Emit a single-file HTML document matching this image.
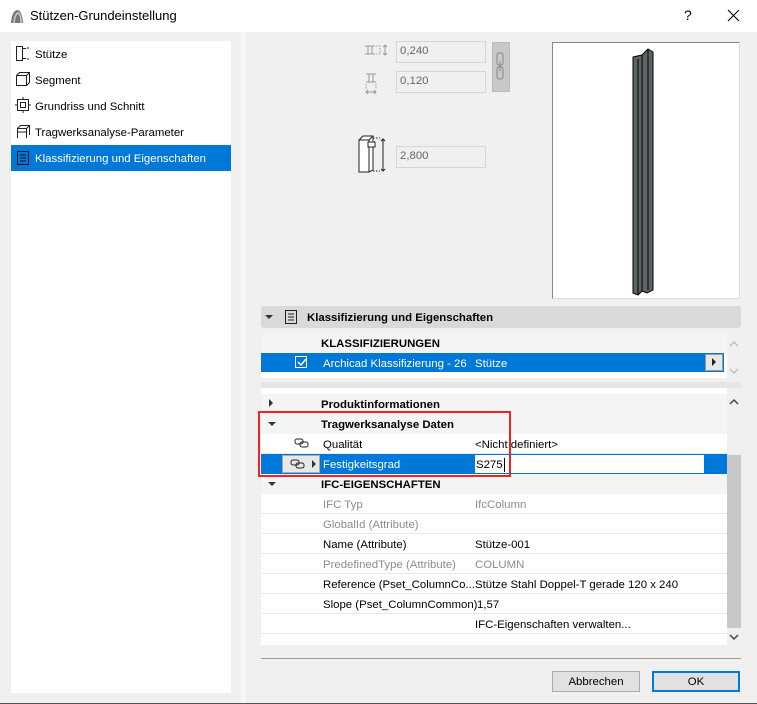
<!DOCTYPE html>
<html><head><meta charset="utf-8"><style>
*{box-sizing:border-box;margin:0;padding:0}
body{width:757px;height:704px;background:#f0f0f0;font-family:"Segoe UI","Liberation Sans",sans-serif;font-size:11.4px;color:#000;position:relative;overflow:hidden}
.a{position:absolute}
.t{position:absolute;white-space:nowrap;line-height:16px;margin-top:1px}
.inp{position:absolute;background:#f0f0f0;border:1px solid #d6d6d6;color:#555;padding-left:3px;line-height:19px;font-size:11.4px}
.row{position:absolute;left:261px;width:466px;height:20px;border-bottom:1px solid #e8e8e8;background:#fff}
.row span{position:absolute;top:3px;white-space:nowrap;line-height:16px}
.g{color:#8c8c8c}
.hd{background:#f4f4f4;font-weight:bold}
.tri{position:absolute;width:0;height:0}
</style></head><body>
<div class="a" style="left:0;top:0;width:757px;height:32px;background:#fff"></div>
<svg class="a" style="left:9px;top:8px" width="16" height="16"><path d="M2 15 Q3 3 8 2 Q13 2 14 15 Z" fill="#777"/><path d="M5 15 Q6 6 9 5 Q12 6 12 15" fill="none" stroke="#ccc" stroke-width="1.5"/></svg>
<div class="t" style="left:30px;top:7px;font-size:13px">Stützen-Grundeinstellung</div>
<div class="t" style="left:684px;top:6px;font-size:14px">?</div>
<svg class="a" style="left:727px;top:9px" width="13" height="13"><path d="M1 1L12 12M12 1L1 12" stroke="#000" stroke-width="1.1"/></svg>

<div class="a" style="left:11px;top:41px;width:220px;height:652px;background:#fff"></div>
<div class="a" style="left:241px;top:32px;width:5px;height:672px;background:#f6f6f6"></div>
<div class="a" style="left:0;top:703px;width:757px;height:1px;background:#555"></div>
<svg class="a" style="left:15px;top:45px" width="16" height="18" fill="none" stroke="#222"><rect x="1.5" y="1.5" width="6" height="14"/><path d="M7.5 3.5H11M7.5 13.5H11M13 2v2M13 13v2"/></svg>
<div class="t" style="left:35px;top:46px">Stütze</div>
<svg class="a" style="left:15px;top:71px" width="16" height="16" fill="none" stroke="#222"><path d="M1.5 4.5L4.5 1.5H14.5V11.5L11.5 14.5H1.5Z M1.5 4.5H11.5V14.5M11.5 4.5L14.5 1.5"/></svg>
<div class="t" style="left:35px;top:72px">Segment</div>
<svg class="a" style="left:15px;top:97px" width="16" height="16" fill="none" stroke="#222"><rect x="2.5" y="2.5" width="11" height="11"/><rect x="5.5" y="5.5" width="5" height="5"/><path d="M8 0v3M8 13v3M0 8h3M13 8h3"/></svg>
<div class="t" style="left:35px;top:98px">Grundriss und Schnitt</div>
<svg class="a" style="left:15px;top:123px" width="16" height="16" fill="none" stroke="#222"><path d="M2.5 15V5.5L5.5 2.5H14.5V12M2.5 5.5H11.5V15M11.5 5.5L14.5 2.5M2.5 9h9"/></svg>
<div class="t" style="left:35px;top:124px">Tragwerksanalyse-Parameter</div>
<div class="a" style="left:11px;top:145px;width:220px;height:26px;background:#0078d7"></div>
<svg class="a" style="left:16px;top:150px" width="14" height="16" fill="none" stroke="#111"><rect x="1.5" y="1.5" width="11" height="13"/><path d="M4 5h6M4 8h6M4 11h6"/></svg>
<div class="t" style="left:35px;top:150px;color:#fff">Klassifizierung und Eigenschaften</div>

<svg class="a" style="left:363px;top:42px" width="30" height="56" fill="none" stroke="#999"><path d="M2 4h10M2 12h10M5 4v8M9 4v8" /><path d="M13 4h4v8h-4" stroke-dasharray="1.5 1.5"/><path d="M22 3v10M20 5l2-2 2 2M20 11l2 2 2-2"/><path d="M3 32h10M3 40h10M6 32v8M10 32v8"/><path d="M3 42v6M13 42v6" stroke-dasharray="1.5 1.5"/><path d="M3 50h10M5 48l-2 2 2 2M11 48l2 2-2 2"/></svg>
<div class="inp" style="left:396px;top:41px;width:90px;height:22px;color:#666">0,240</div>
<div class="inp" style="left:396px;top:71px;width:90px;height:22px;color:#666">0,120</div>
<div class="a" style="left:492px;top:42px;width:18px;height:50px;background:#c8c8c8;border:1px solid #bbb"></div>
<svg class="a" style="left:495px;top:52px" width="12" height="30" fill="none" stroke="#888"><rect x="2" y="1" width="6" height="12" rx="2"/><rect x="2" y="15" width="6" height="12" rx="2"/><path d="M5 9v10"/></svg>
<svg class="a" style="left:357px;top:135px" width="36" height="38" fill="none" stroke="#222"><path d="M2 5L6 1h10v34l-4 2H2z" fill="#fff"/><path d="M2 5h10v32M12 5l4-4"/><path d="M16 3h7M16 36h7" stroke-dasharray="1.5 1.5"/><path d="M26 4v32M24 6l2-2 2 2M24 34l2 2 2-2"/><rect x="11" y="7" width="7" height="5" fill="#fff"/></svg>
<div class="inp" style="left:396px;top:146px;width:90px;height:22px;color:#666">2,800</div>

<div class="a" style="left:552px;top:42px;width:188px;height:257px;background:#fff;border:1px solid #888;border-right-color:#ddd;border-bottom-color:#ddd"></div>
<svg class="a" style="left:630px;top:45px" width="30" height="255"><path d="M3 12L12 10L18 4L23 7V245L17 248L12 246L8 250L3 248Z" fill="#5e6466" stroke="#000"/><path d="M8 14V250M12 10V246M18 5V245" stroke="#000" fill="none"/></svg>

<div class="a" style="left:261px;top:306px;width:480px;height:22px;background:#d9d9d9;border-radius:3px"></div>
<div class="tri" style="left:265px;top:315px;border-left:4px solid transparent;border-right:4px solid transparent;border-top:4px solid #333"></div>
<svg class="a" style="left:284px;top:309px" width="14" height="16" fill="none" stroke="#222"><rect x="1.5" y="1.5" width="11" height="13"/><path d="M4 5h6M4 8h6M4 11h6"/></svg>
<div class="t" style="left:307px;top:309px;font-weight:bold">Klassifizierung und Eigenschaften</div>

<div class="a" style="left:261px;top:333px;width:466px;height:45px;background:#fff"></div>
<div class="a" style="left:261px;top:333px;width:466px;height:20px;background:#f4f4f4"></div>
<div class="t" style="left:321px;top:335px;font-weight:bold">KLASSIFIZIERUNGEN</div>
<div class="a" style="left:261px;top:353px;width:463px;height:19px;background:#0078d7"></div>
<div class="a" style="left:295px;top:356px;width:12px;height:12px;border:1px solid #fff"></div>
<svg class="a" style="left:296px;top:357px" width="11" height="11"><path d="M2 5l3 3 5-6" stroke="#fff" stroke-width="1.5" fill="none"/></svg>
<div class="t" style="left:323px;top:355px;color:#fff">Archicad Klassifizierung - 26</div>
<div class="t" style="left:475px;top:355px;color:#fff">Stütze</div>
<div class="a" style="left:705px;top:354px;width:18px;height:17px;background:#e8e8e8;border:1px solid #999"></div>
<div class="tri" style="left:712px;top:358px;border-top:4px solid transparent;border-bottom:4px solid transparent;border-left:4px solid #222"></div>
<svg class="a" style="left:728px;top:340px" width="12" height="8"><path d="M2 6l4-4 4 4" stroke="#bbb" stroke-width="1.3" fill="none"/></svg>
<svg class="a" style="left:728px;top:367px" width="12" height="8"><path d="M2 2l4 4 4-4" stroke="#bbb" stroke-width="1.3" fill="none"/></svg>

<div class="a" style="left:261px;top:382px;width:480px;height:6px;background:#e6e6e6"></div>
<div class="a" style="left:261px;top:388px;width:466px;height:257px;background:#fff"></div>
<div class="a" style="left:727px;top:455px;width:14px;height:173px;background:#c8c8c8"></div>
<svg class="a" style="left:728px;top:398px" width="12" height="8"><path d="M2 6l4-4 4 4" stroke="#444" stroke-width="1.5" fill="none"/></svg>
<svg class="a" style="left:728px;top:633px" width="12" height="8"><path d="M2 2l4 4 4-4" stroke="#444" stroke-width="1.5" fill="none"/></svg>

<div class="row hd" style="top:394px;border:none"><span style="left:60px">Produktinformationen</span></div>
<div class="tri" style="left:269px;top:399px;border-top:4px solid transparent;border-bottom:4px solid transparent;border-left:4px solid #333"></div>
<div class="row hd" style="top:414px;border:none"><span style="left:60px">Tragwerksanalyse Daten</span></div>
<div class="tri" style="left:268px;top:422px;border-left:4px solid transparent;border-right:4px solid transparent;border-top:4px solid #333"></div>
<div class="row" style="top:434px"><span style="left:62px">Qualität</span><span style="left:214px">&lt;Nicht definiert&gt;</span></div>
<svg class="a" style="left:294px;top:438px" width="16" height="10" fill="none" stroke="#222"><rect x="1" y="1" width="8" height="5" rx="2"/><rect x="6" y="4" width="8" height="5" rx="2"/></svg>
<div class="row" style="top:454px;background:#0078d7;border:none"></div>
<div class="a" style="left:282px;top:455px;width:38px;height:18px;background:#e8e8e8;border:1px solid #aaa"></div>
<svg class="a" style="left:290px;top:459px" width="16" height="10" fill="none" stroke="#222"><rect x="1" y="1" width="8" height="5" rx="2"/><rect x="6" y="4" width="8" height="5" rx="2"/></svg>
<div class="tri" style="left:312px;top:460px;border-top:4px solid transparent;border-bottom:4px solid transparent;border-left:4px solid #333"></div>
<div class="t" style="left:323px;top:456px;color:#fff">Festigkeitsgrad</div>
<div class="a" style="left:475px;top:455px;width:229px;height:18px;background:#fff"></div>
<div class="t" style="left:476px;top:456px">S275<span style="display:inline-block;width:1px;height:14px;background:#000;vertical-align:middle;margin-left:1px"></span></div>
<div class="row hd" style="top:474px;border:none"><span style="left:60px">IFC-EIGENSCHAFTEN</span></div>
<div class="tri" style="left:268px;top:482px;border-left:4px solid transparent;border-right:4px solid transparent;border-top:4px solid #333"></div>
<div class="a" style="left:258px;top:411px;width:253px;height:66px;border:2px solid #e8262a;z-index:5"></div>
<div class="row" style="top:494px"><span class="g" style="left:62px">IFC Typ</span><span class="g" style="left:214px">IfcColumn</span></div>
<div class="row" style="top:514px"><span class="g" style="left:62px">GlobalId (Attribute)</span></div>
<div class="row" style="top:534px"><span style="left:62px">Name (Attribute)</span><span style="left:214px">Stütze-001</span></div>
<div class="row" style="top:554px"><span class="g" style="left:62px">PredefinedType (Attribute)</span><span class="g" style="left:214px">COLUMN</span></div>
<div class="row" style="top:574px"><span style="left:62px">Reference (Pset_ColumnCo...</span><span style="left:214px">Stütze Stahl Doppel-T gerade 120 x 240</span></div>
<div class="row" style="top:594px"><span style="left:62px">Slope (Pset_ColumnCommon)</span><span style="left:216px">1,57</span></div>
<div class="row" style="top:614px"><span style="left:214px">IFC-Eigenschaften verwalten...</span></div>

<div class="a" style="left:261px;top:658px;width:480px;height:1px;background:#999"></div>
<div class="a" style="left:552px;top:671px;width:88px;height:21px;background:#e1e1e1;border:1px solid #adadad"></div>
<div class="t" style="left:552px;top:673px;width:88px;text-align:center">Abbrechen</div>
<div class="a" style="left:652px;top:671px;width:88px;height:21px;background:#e1e1e1;border:2px solid #0078d7"></div>
<div class="t" style="left:652px;top:673px;width:88px;text-align:center">OK</div>
</body></html>
